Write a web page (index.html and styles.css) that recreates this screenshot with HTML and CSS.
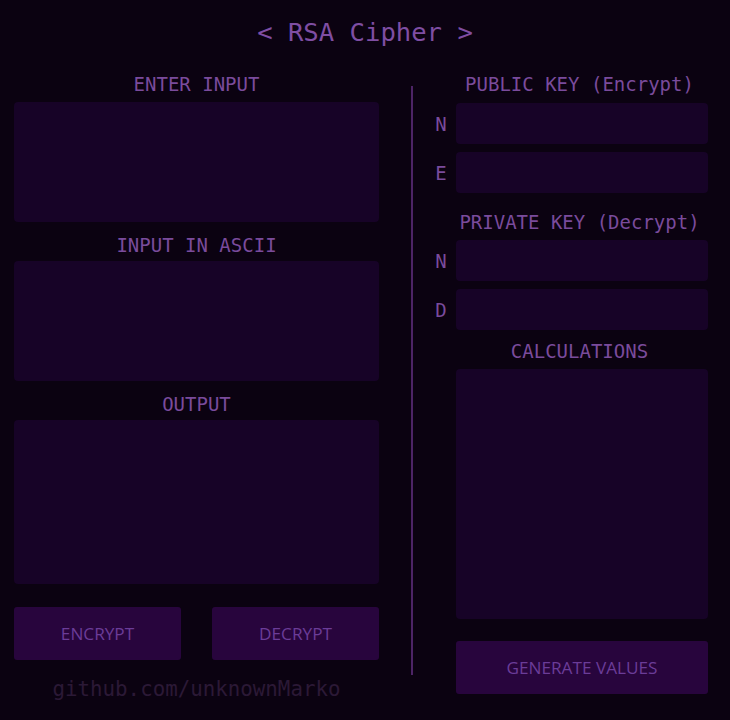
FILE: index.html
```html
<!DOCTYPE html>
<html>
<head>
<meta charset="utf-8">
<link rel="stylesheet" href="styles.css">
</head>
<body>
<h1 class="title">&lt; RSA Cipher &gt;</h1>
<main class="main">
  <section class="left">
    <h2 class="heading h-first">ENTER INPUT</h2>
    <textarea class="area area-in"></textarea>
    <h2 class="heading h-next">INPUT IN ASCII</h2>
    <textarea class="area area-ascii"></textarea>
    <h2 class="heading h-next">OUTPUT</h2>
    <textarea class="area area-out"></textarea>
    <div class="actions">
      <button class="btn">ENCRYPT</button>
      <button class="btn">DECRYPT</button>
    </div>
    <p class="footer">github.com/unknownMarko</p>
  </section>
  <div class="divider"></div>
  <section class="right">
    <h2 class="heading rh h-first">PUBLIC KEY (Encrypt)</h2>
    <div class="key-row row-gap"><span class="key">N</span><input class="field"></div>
    <div class="key-row"><span class="key">E</span><input class="field"></div>
    <h2 class="heading rh h-private">PRIVATE KEY (Decrypt)</h2>
    <div class="key-row row-gap"><span class="key">N</span><input class="field"></div>
    <div class="key-row"><span class="key">D</span><input class="field"></div>
    <h2 class="heading rh h-calc">CALCULATIONS</h2>
    <textarea class="area area-calc"></textarea>
    <button class="btn btn-gen">GENERATE VALUES</button>
  </section>
</main>
</body>
</html>
```

FILE: styles.css
```css
html, body {
  margin: 0;
  padding: 0;
  background: #0b0211;
}
body {
  width: 730px;
  height: 720px;
  overflow: hidden;
  font-family: "DejaVu Sans Mono", "Liberation Mono", monospace;
  color: #7a4b9c;
}
.title {
  margin: 12px 0 0;
  height: 40px;
  line-height: 40px;
  font-size: 25.6px;
  font-weight: normal;
  text-align: center;
  color: #7f4ea3;
}
.main {
  display: flex;
  align-items: flex-start;
  margin-top: 18px;
  padding: 0 22px 0 14px;
}
.left {
  width: 365px;
  display: flex;
  flex-direction: column;
}
.heading {
  margin: 0;
  height: 28px;
  line-height: 28px;
  font-size: 19px;
  font-weight: normal;
  text-align: center;
  color: #7a4b9c;
  white-space: nowrap;
}
.left .h-first { margin-bottom: 4px; }
.left .h-next { margin-top: 9px; margin-bottom: 2px; }
.area {
  display: block;
  box-sizing: border-box;
  border: none;
  outline: none;
  resize: none;
  border-radius: 4px;
  background: #170327;
  margin: 0;
  padding: 0;
}
.area-in, .area-ascii { width: 365px; height: 120px; }
.area-out { width: 365px; height: 164px; }
.actions {
  display: flex;
  justify-content: space-between;
  margin-top: 23px;
}
.btn {
  box-sizing: border-box;
  width: 167px;
  height: 53px;
  border: none;
  border-radius: 3px;
  background: #28053d;
  color: #6b3c98;
  font-family: "Open Sans", "Noto Sans", sans-serif;
  font-size: 17.2px;
  padding: 0;
  margin: 0;
}
.footer {
  margin: 15px 0 0;
  height: 28px;
  line-height: 28px;
  font-size: 20.8px;
  text-align: center;
  color: #2b1936;
}
.divider {
  width: 2px;
  height: 589px;
  margin: 16px 18px 0 32px;
  background: #4d2466;
}
.right {
  width: 277px;
  display: flex;
  flex-direction: column;
}
.rh {
  margin-left: 20px;
  width: 257px;
}
.right .h-first { margin-bottom: 5px; }
.right .h-private { margin-top: 15px; margin-bottom: 4px; }
.right .h-calc { margin-top: 7px; margin-bottom: 4px; }
.key-row {
  display: flex;
  align-items: center;
  gap: 5px;
}
.row-gap { margin-bottom: 8px; }
.key {
  width: 20px;
  text-align: center;
  font-size: 19px;
  color: #7a4b9c;
}
.field {
  box-sizing: border-box;
  width: 252px;
  height: 41px;
  border: none;
  outline: none;
  border-radius: 4px;
  background: #170327;
  margin: 0;
  padding: 0;
}
.area-calc {
  margin-left: 25px;
  width: 252px;
  height: 250px;
}
.btn-gen {
  margin-left: 25px;
  width: 252px;
  height: 53px;
  margin-top: 22px;
}
```
